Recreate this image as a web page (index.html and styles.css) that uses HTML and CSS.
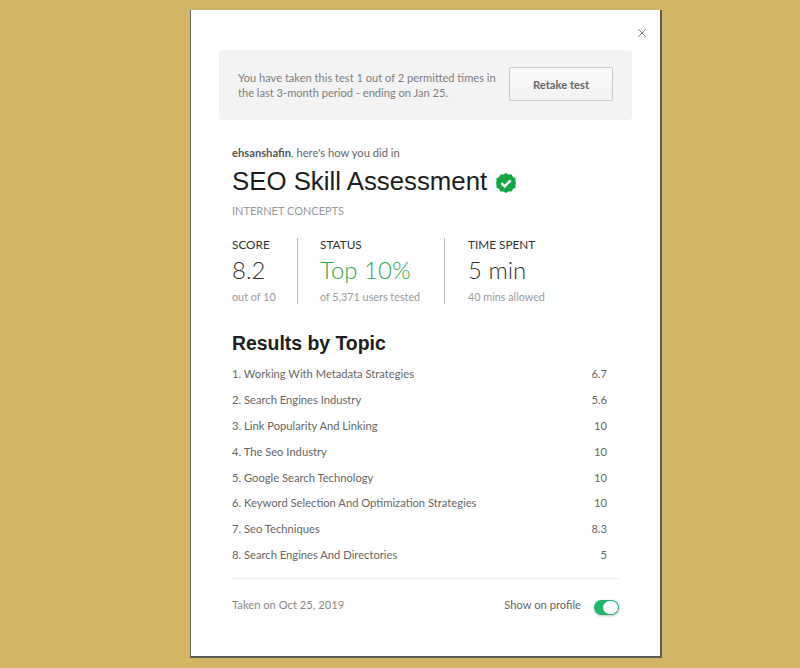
FILE: index.html
```html
<!DOCTYPE html>
<html lang="en">
<head>
  <meta charset="UTF-8">
  <meta name="viewport" content="width=device-width, initial-scale=1.0">
  <title>SEO Skill Assessment</title>
  <link rel="stylesheet" href="styles.css">
</head>
<body>
<div class="modal">
  <div class="close-row">
    <svg class="close" width="10" height="10" viewBox="0 0 10 10"><path d="M1 1l8 8M9 1l-8 8" stroke="#888" stroke-width="1" fill="none"/></svg>
  </div>

  <div class="notice">
    <p class="notice-text">You have taken this test 1 out of 2 permitted times in the last 3-month period - ending on Jan 25.</p>
    <button class="retake">Retake test</button>
  </div>

  <div class="content">
    <div class="intro"><strong>ehsanshafin</strong>, here's how you did in</div>
    <h1 class="title">SEO Skill Assessment
      <svg class="badge" width="20" height="20" viewBox="0 0 20 20">
        <path d="M10 0l2.6 1.5 3-.1 1.4 2.6 2.6 1.4-.1 3L20 10l-.5 1.6.1 3-2.6 1.4-1.4 2.6-3-.1L10 20l-2.6-1.5-3 .1L3 16l-2.6-1.4.1-3L0 10l.5-1.6-.1-3L3 4l1.4-2.6 3 .1z" fill="#12a544"/>
        <path d="M5.4 10.2l3.2 3.2 6-6" stroke="#fff" stroke-width="2.6" fill="none"/>
      </svg>
    </h1>
    <div class="category">INTERNET CONCEPTS</div>

    <div class="stats">
      <div class="stat stat-score">
        <div class="stat-label">SCORE</div>
        <div class="stat-value">8.2</div>
        <div class="stat-note">out of 10</div>
      </div>
      <div class="stat stat-status">
        <div class="stat-label">STATUS</div>
        <div class="stat-value green">Top 10%</div>
        <div class="stat-note">of 5,371 users tested</div>
      </div>
      <div class="stat stat-time">
        <div class="stat-label">TIME SPENT</div>
        <div class="stat-value">5 min</div>
        <div class="stat-note">40 mins allowed</div>
      </div>
    </div>

    <h2 class="topics-title">Results by Topic</h2>
    <ul class="topics">
      <li><span>1. Working With Metadata Strategies</span><span class="num">6.7</span></li>
      <li><span>2. Search Engines Industry</span><span class="num">5.6</span></li>
      <li><span>3. Link Popularity And Linking</span><span class="num">10</span></li>
      <li><span>4. The Seo Industry</span><span class="num">10</span></li>
      <li><span>5. Google Search Technology</span><span class="num">10</span></li>
      <li><span>6. Keyword Selection And Optimization Strategies</span><span class="num">10</span></li>
      <li><span>7. Seo Techniques</span><span class="num">8.3</span></li>
      <li><span>8. Search Engines And Directories</span><span class="num">5</span></li>
    </ul>

    <div class="footer">
      <span class="taken">Taken on Oct 25, 2019</span>
      <div class="profile">
        <span>Show on profile</span>
        <span class="toggle"><span class="knob"></span></span>
      </div>
    </div>
  </div>
</div>
</body>
</html>
```

FILE: styles.css
```css
body {
  font-family: Lato, sans-serif;
  margin: 0;
  padding: 10px 0 0 190px;
  height: 658px;
  overflow: hidden;
  background-color: #d2b666;
  color: #333;
}

.modal {
  box-sizing: border-box;
  width: 472px;
  height: 648px;
  background-color: #fff;
  border-left: 1px solid #666;
  border-right: 2px solid #5c5c5c;
  border-bottom: 2px solid #5c5c5c;
  padding: 0 28px;
}

.close-row {
  display: flex;
  justify-content: flex-end;
  height: 40px;
  padding: 18px 0 0;
  box-sizing: border-box;
  margin-right: -15px;
}

.notice {
  display: flex;
  align-items: center;
  justify-content: space-between;
  box-sizing: border-box;
  height: 70px;
  padding: 0 19px;
  background-color: #f3f3f3;
  border-radius: 4px;
}

.notice-text {
  margin: 0;
  width: 265px;
  font-size: 11.1px;
  line-height: 15.5px;
  color: #808080;
}

.retake {
  width: 104px;
  height: 34px;
  margin-bottom: 2px;
  border: 1px solid #c8c8c8;
  border-radius: 2px;
  background: linear-gradient(#fbfbfb, #f2f2f2);
  font-family: Lato, sans-serif;
  font-size: 11.2px;
  font-weight: bold;
  color: #666;
}

.content {
  padding: 0 13px;
}

.intro {
  margin-top: 26px;
  font-size: 11.2px;
  line-height: 14px;
  color: #666;
}

.intro strong {
  color: #555;
}

.title {
  display: flex;
  align-items: center;
  gap: 9px;
  margin: 4px 0 0;
  font-family: "Liberation Sans", sans-serif;
  font-size: 25.8px;
  font-weight: normal;
  line-height: 34px;
  color: #1d1d1d;
}

.badge {
  margin-top: 3px;
}

.category {
  margin-top: 6px;
  font-size: 11px;
  line-height: 14px;
  color: #999;
}

.stats {
  display: flex;
  margin-top: 20px;
}

.stat {
  height: 66px;
}

.stat-score {
  width: 65px;
  border-right: 1px solid #bbb;
}

.stat-status {
  width: 124px;
  padding-left: 22px;
  border-right: 1px solid #bbb;
}

.stat-time {
  padding-left: 23px;
}

.stat-label {
  font-size: 11.8px;
  line-height: 14px;
  color: #333;
}

.stat-value {
  margin-top: 3px;
  font-size: 24px;
  line-height: 30px;
  font-weight: 300;
  color: #333;
}

.green {
  color: #2fa552;
}

.stat-note {
  margin-top: 5px;
  font-size: 10.8px;
  line-height: 14px;
  color: #999;
}

.topics-title {
  margin: 27px 0 0;
  font-family: "Liberation Sans", sans-serif;
  font-size: 19.4px;
  line-height: 24px;
  color: #1d1d1d;
}

.topics {
  list-style: none;
  margin: 6px 0 0;
  padding: 0;
}

.topics li {
  display: flex;
  justify-content: space-between;
  height: 25.9px;
  line-height: 25.9px;
  font-size: 11.2px;
  color: #666;
}

.num {
  margin-right: 12px;
  text-align: right;
}

.footer {
  display: flex;
  justify-content: space-between;
  align-items: flex-start;
  margin-top: 10px;
  padding-top: 19px;
  border-top: 1px solid #eee;
  font-size: 11.2px;
  line-height: 14px;
  color: #888;
}

.profile {
  display: flex;
  align-items: flex-start;
  gap: 13px;
  color: #666;
}

.toggle {
  display: block;
  box-sizing: border-box;
  width: 25px;
  height: 15px;
  margin-top: 2px;
  padding: 1px;
  background-color: #1fb56c;
  border-radius: 8px;
  box-shadow: 0 1px 3px rgba(0, 0, 0, 0.25);
}

.knob {
  display: block;
  width: 15px;
  height: 13px;
  margin-left: 8px;
  background-color: #fff;
  border-radius: 7px;
}
```
